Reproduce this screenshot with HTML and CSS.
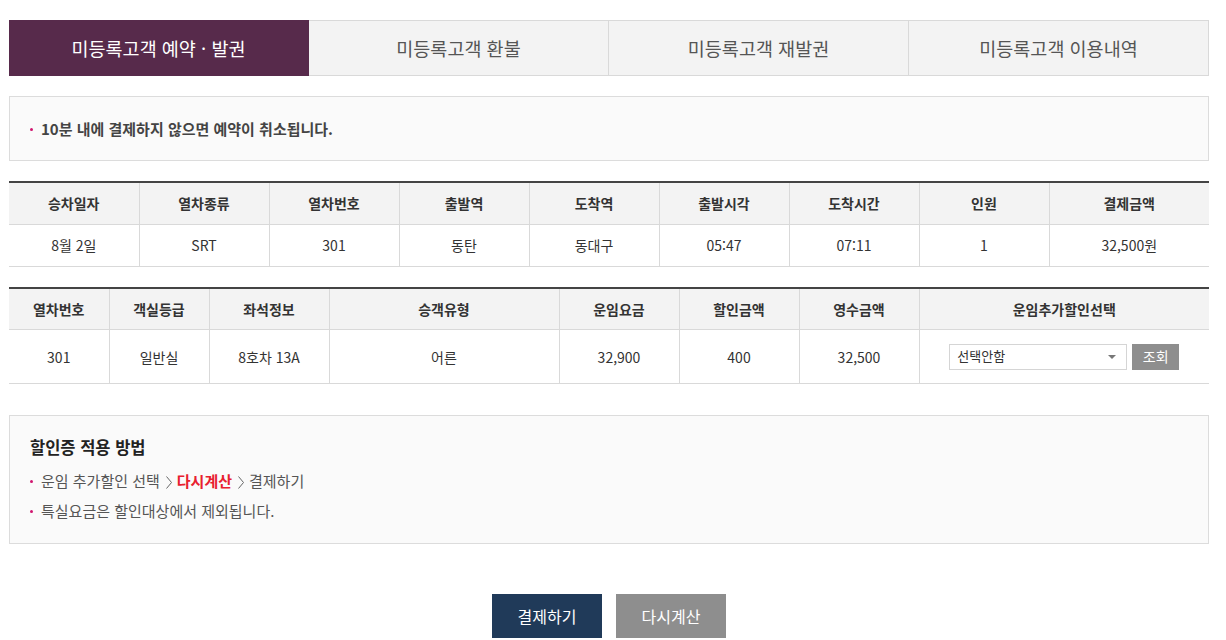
FILE: index.html
```html
<!DOCTYPE html>
<html lang="ko">
<head>
<meta charset="utf-8">
<link rel="stylesheet" href="styles.css">
</head>
<body>
<div class="wrap">
  <ul class="tabs">
    <li class="tab on">미등록고객 예약 · 발권</li>
    <li class="tab">미등록고객 환불</li>
    <li class="tab">미등록고객 재발권</li>
    <li class="tab">미등록고객 이용내역</li>
  </ul>

  <div class="notice">
    <p class="dot bold">10분 내에 결제하지 않으면 예약이 취소됩니다.</p>
  </div>

  <table class="tbl t1">
    <colgroup>
      <col class="c130"><col class="c130"><col class="c130"><col class="c130"><col class="c130"><col class="c130"><col class="c130"><col class="c130"><col>
    </colgroup>
    <thead>
      <tr><th>승차일자</th><th>열차종류</th><th>열차번호</th><th>출발역</th><th>도착역</th><th>출발시각</th><th>도착시간</th><th>인원</th><th>결제금액</th></tr>
    </thead>
    <tbody>
      <tr><td>8월 2일</td><td>SRT</td><td>301</td><td>동탄</td><td>동대구</td><td>05:47</td><td>07:11</td><td>1</td><td>32,500원</td></tr>
    </tbody>
  </table>

  <table class="tbl t2">
    <colgroup>
      <col class="c100"><col class="c100"><col class="c120"><col class="c230"><col class="c120"><col class="c120"><col class="c120"><col>
    </colgroup>
    <thead>
      <tr><th>열차번호</th><th>객실등급</th><th>좌석정보</th><th>승객유형</th><th>운임요금</th><th>할인금액</th><th>영수금액</th><th>운임추가할인선택</th></tr>
    </thead>
    <tbody>
      <tr><td>301</td><td>일반실</td><td>8호차 13A</td><td>어른</td><td>32,900</td><td>400</td><td>32,500</td>
        <td class="selcell">
          <div class="selwrap">
            <div class="select"><span class="seltxt">선택안함</span><span class="arrow"></span></div>
            <button class="btn-sm">조회</button>
          </div>
        </td>
      </tr>
    </tbody>
  </table>

  <div class="info">
    <h3 class="info-title">할인증 적용 방법</h3>
    <p class="dot">운임 추가할인 선택<svg class="chev" width="6" height="13" viewBox="0 0 6 13"><path d="M0.5 0.5 L5.5 6.5 L0.5 12.5" fill="none" stroke="#666" stroke-width="1"/></svg><strong class="red">다시계산</strong><svg class="chev" width="6" height="13" viewBox="0 0 6 13"><path d="M0.5 0.5 L5.5 6.5 L0.5 12.5" fill="none" stroke="#666" stroke-width="1"/></svg>결제하기</p>
    <p class="dot">특실요금은 할인대상에서 제외됩니다.</p>
  </div>

  <div class="btns">
    <button class="btn pay">결제하기</button>
    <button class="btn recalc">다시계산</button>
  </div>
</div>
</body>
</html>
```

FILE: styles.css
```css
* { box-sizing: border-box; }
html, body { margin: 0; padding: 0; background: #fff; }
body {
  font-family: "Noto Sans CJK KR", "Noto Sans", sans-serif;
  color: #333;
  font-size: 14px;
}
.wrap {
  width: 1200px;
  margin-left: 9px;
  padding-top: 20px;
}
.tabs {
  list-style: none;
  margin: 0;
  padding: 0;
  display: flex;
}
.tab {
  flex: 1;
  height: 56px;
  display: flex;
  align-items: center;
  justify-content: center;
  background: #f3f3f3;
  border: 1px solid #d9d9d9;
  border-left: 0;
  font-size: 18.5px;
  color: #555;
}
.tab:last-child { border-right: 1px solid #d9d9d9; }
.tab.on {
  background: #572a4b;
  border-color: #572a4b;
  color: #fff;
}
.notice {
  margin-top: 20px;
  height: 65px;
  border: 1px solid #dcdcdc;
  background: #fafafa;
  padding: 0 20px;
  display: flex;
  align-items: center;
}
.notice p { margin: 0; }
.dot {
  position: relative;
  padding-left: 11px;
  font-size: 15px;
  color: #555;
}
.dot::before {
  content: "";
  position: absolute;
  left: 0;
  top: 50%;
  width: 3px;
  height: 3px;
  margin-top: -1px;
  background: #d0166f;
  border-radius: 50%;
}
.bold { font-weight: bold; color: #444; }

.tbl {
  width: 1200px;
  border-collapse: collapse;
  table-layout: fixed;
  border-top: 2px solid #444;
  text-align: center;
}
.t1 { margin-top: 20px; }
.t2 { margin-top: 20px; }
.c100 { width: 100px; }
.c120 { width: 120px; }
.c130 { width: 130px; }
.c230 { width: 230px; }
.tbl th {
  height: 42px;
  background: #f3f3f3;
  font-weight: bold;
  color: #333;
  font-size: 14px;
  border: 1px solid #d9d9d9;
  border-top: 0;
  padding: 0;
}
.tbl td {
  height: 42px;
  font-size: 14px;
  color: #333;
  border: 1px solid #d9d9d9;
  padding: 0;
}
.t2 td { height: 54px; }
.tbl th:first-child, .tbl td:first-child { border-left: 0; }
.tbl th:last-child, .tbl td:last-child { border-right: 0; }
.selwrap {
  display: flex;
  align-items: center;
  justify-content: center;
  gap: 5px;
}
.select {
  width: 178px;
  height: 26px;
  border: 1px solid #d5d5d5;
  background: #fff;
  display: flex;
  align-items: center;
  justify-content: space-between;
  padding: 0 10px 2px 7px;
  font-size: 13px;
  color: #333;
}
.arrow {
  width: 0;
  height: 0;
  margin-top: 2px;
  border-left: 4px solid transparent;
  border-right: 4px solid transparent;
  border-top: 4px solid #777;
}
.btn-sm {
  width: 47px;
  height: 26px;
  border: 0;
  background: #8e8e8e;
  color: #fff;
  font-family: inherit;
  font-size: 14px;
  padding: 0 0 2px;
}
.info {
  margin-top: 31px;
  border: 1px solid #dcdcdc;
  background: #fafafa;
  padding: 18px 20px 17px;
}
.info-title {
  margin: 0 0 6px;
  font-size: 16.5px;
  font-weight: bold;
  color: #222;
  line-height: 26px;
}
.info .dot {
  margin: 0;
  line-height: 30px;
  font-size: 15px;
  color: #555;
}
.chev {
  display: inline-block;
  vertical-align: -2px;
  margin: 0 5px 0 6px;
}
.red { color: #e8202f; font-weight: bold; }
.btns {
  margin-top: 50px;
  display: flex;
  justify-content: center;
  gap: 14px;
}
.btn {
  width: 110px;
  height: 44px;
  border: 0;
  font-family: inherit;
  font-size: 16px;
  color: #fff;
  padding: 0;
}
.pay { background: #203a59; }
.recalc { background: #8e8e8e; }
```
